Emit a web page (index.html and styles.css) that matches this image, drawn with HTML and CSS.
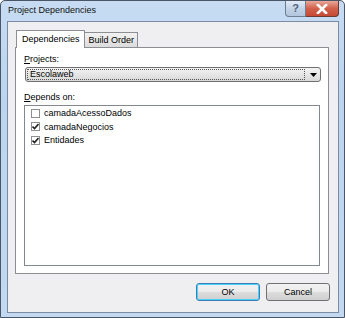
FILE: index.html
```html
<!DOCTYPE html>
<html>
	<head>
		<link rel="stylesheet" href="styles.css">
		<title>Project Dependencies</title>
	</head>
	<body>
		<div class="window">
			<div class="titlebar">
				<span class="title">Project Dependencies</span>
				<div class="caption-buttons">
					<span class="cap-help">?</span>
					<span class="cap-close">
						<svg width="12" height="10" viewBox="0 0 12 10"><path d="M2 1 L10 9 M10 1 L2 9" stroke="#fff" stroke-width="2.6" stroke-linecap="square"/></svg>
					</span>
				</div>
			</div>
			<div class="client">
				<div class="tabs">
					<span class="tab tab-active">Dependencies</span>
					<span class="tab">Build Order</span>
				</div>
				<div class="panel">
					<div class="label"><u>P</u>rojects:</div>
					<div class="combo">
						<div class="combo-text"><span class="focus">Escolaweb</span></div>
						<div class="combo-arrow">
							<svg width="7" height="4" viewBox="0 0 7 4"><path d="M0 0 H7 L3.5 4 Z" fill="#000"/></svg>
						</div>
					</div>
					<div class="label label-depends"><u>D</u>epends on:</div>
					<div class="listbox">
						<div class="item"><span class="check"></span>camadaAcessoDados</div>
						<div class="item"><span class="check"><svg width="7" height="7" viewBox="0 0 7 7"><path d="M0.5 3.5 L2.5 5.5 L6.5 1" stroke="#222" stroke-width="1.6" fill="none"/></svg></span>camadaNegocios</div>
						<div class="item"><span class="check"><svg width="7" height="7" viewBox="0 0 7 7"><path d="M0.5 3.5 L2.5 5.5 L6.5 1" stroke="#222" stroke-width="1.6" fill="none"/></svg></span>Entidades</div>
					</div>
				</div>
				<div class="buttons">
					<button class="btn btn-default">OK</button>
					<button class="btn">Cancel</button>
				</div>
			</div>
		</div>
	</body>
</html>
```

FILE: styles.css
```css
body {
	margin: 0;
	font-family: "Liberation Sans", Arial, sans-serif;
	font-size: 9px;
	color: #000;
}
.window {
	width: 345px;
	height: 318px;
	box-sizing: border-box;
	border: 1px solid #4a5566;
	border-radius: 5px 5px 0 0;
	background: linear-gradient(#c7dcf3, #bcd4ef 30%, #c3d9f2);
	display: flex;
	flex-direction: column;
	padding: 0 5px 4px 6px;
}
.titlebar {
	height: 20px;
	display: flex;
	justify-content: space-between;
	align-items: flex-start;
}
.title {
	margin-top: 4px;
	margin-left: 1px;
	color: #111;
}
.caption-buttons {
	display: flex;
}
.cap-help {
	width: 21px;
	height: 16px;
	box-sizing: border-box;
	border: 1px solid #6d7d92;
	border-top: none;
	border-radius: 0 0 0 4px;
	background: linear-gradient(#e2ebf6, #c3d3e6 50%, #b3c6dd);
	color: #4e6280;
	font-weight: bold;
	font-size: 11px;
	text-align: center;
	line-height: 15px;
}
.cap-close {
	width: 33px;
	height: 16px;
	box-sizing: border-box;
	border: 1px solid #6a3a33;
	border-top: none;
	border-left: none;
	border-radius: 0 0 4px 0;
	background: linear-gradient(#e9a99b, #d2604a 50%, #c64a34);
	display: flex;
	align-items: center;
	justify-content: center;
}
.client {
	flex: 1;
	border: 1px solid #7c8ba0;
	background: #efeff2;
	display: flex;
	flex-direction: column;
	padding: 0 9px 0 7px;
}
.tabs {
	display: flex;
	align-items: flex-end;
	margin-top: 7px;
	padding-left: 1px;
	height: 18px;
}
.tab {
	height: 14px;
	padding: 0 3px 0 4px;
	border: 1px solid #8c8e94;
	border-bottom: none;
	background: linear-gradient(#f2f2f2, #dcdcdc);
	line-height: 15px;
	margin-left: -1px;
}
.tab-active {
	height: 17px;
	line-height: 17px;
	background: #fff;
	padding: 0 4px 0 5px;
	margin-left: 0;
	position: relative;
	z-index: 1;
	margin-bottom: -1px;
}
.panel {
	height: 227px;
	box-sizing: border-box;
	border: 1px solid #8c8e94;
	background: #fff;
	padding: 4px 7px 0 8px;
}
.label {
	height: 14px;
	line-height: 14px;
}
.combo {
	margin-top: 1px;
	margin-left: 1px;
	height: 15px;
	box-sizing: border-box;
	border: 1px solid #707070;
	border-radius: 3px;
	background: linear-gradient(#f3f3f3, #e6e6e6 50%, #d8d8d8);
	display: flex;
}
.combo-text {
	flex: 1;
	padding: 1px;
	display: flex;
}
.focus {
	flex: 1;
	border: 1px dotted #555;
	line-height: 9px;
	padding-left: 2px;
}
.combo-arrow {
	width: 14px;
	display: flex;
	align-items: center;
	justify-content: center;
}
.label-depends {
	margin-top: 8px;
}
.listbox {
	margin-top: 1px;
	height: 161px;
	box-sizing: border-box;
	border: 1px solid #828790;
	background: #fff;
	padding-top: 0.5px;
	margin-right: 1px;
}
.item {
	height: 13.5px;
	display: flex;
	align-items: center;
	padding-left: 6px;
}
.check {
	width: 9px;
	height: 9px;
	box-sizing: border-box;
	border: 1px solid #8e8f8f;
	background: #fff;
	margin-right: 4px;
	display: flex;
	align-items: center;
	justify-content: center;
}
.buttons {
	display: flex;
	justify-content: flex-end;
	gap: 6px;
	margin-top: 9px;
	margin-right: -1px;
}
.btn {
	width: 64px;
	height: 18px;
	box-sizing: border-box;
	border: 1px solid #707070;
	border-radius: 3px;
	background: linear-gradient(#f2f2f2, #ebebeb 50%, #dddddd 51%, #cfcfcf);
	font-family: "Liberation Sans", Arial, sans-serif;
	font-size: 9px;
	color: #000;
	padding: 0;
}
.btn-default {
	border-color: #3c7fb1;
	box-shadow: inset 0 0 0 1px #48d0ff;
}
```
